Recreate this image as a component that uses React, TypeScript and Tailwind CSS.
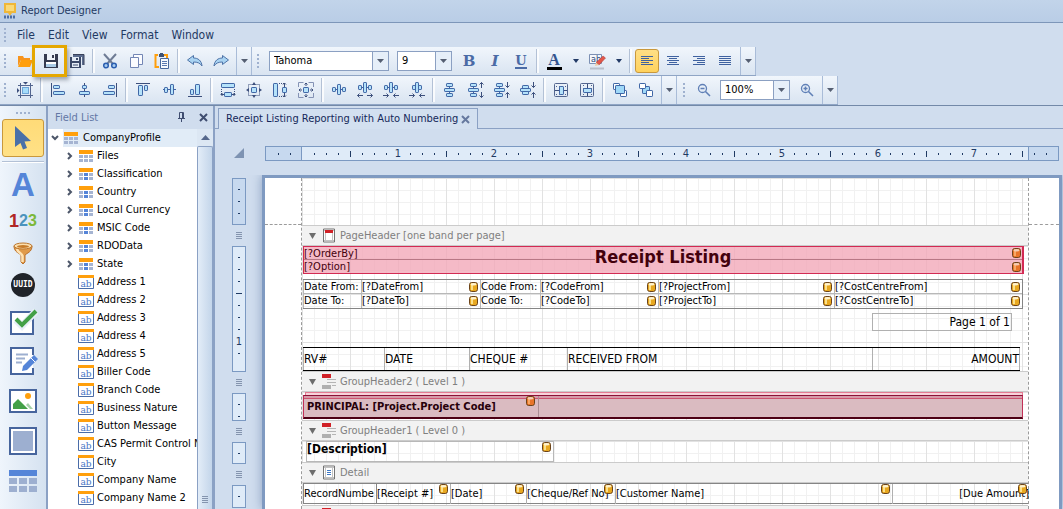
import React from 'react';

const INK = '#3c4f7c';
const EDGE = '#3f66a6';
const FILL = '#b5e2fa';

type BoxProps = { x: number; y: number; w: number; h: number; f?: string };

function Box({ x, y, w, h, f = FILL }: BoxProps) {
  return <rect x={x + 0.5} y={y + 0.5} width={w - 1} height={h - 1} fill={f} stroke={EDGE} rx={0.6} />;
}

function Glyph({ children }: { children: React.ReactNode }) {
  return (
    <svg width="16" height="16" viewBox="0 0 16 16" fill="none" aria-hidden="true">
      {children}
    </svg>
  );
}

const Line = ({ d, c = INK }: { d: string; c?: string }) => <path d={d} stroke={c} fill="none" />;

const arrowsOut = <Line d="M0.5 13.5H6M2.5 11.5L0.5 13.5L2.5 15.5M10 13.5H15.5M13.5 11.5L15.5 13.5L13.5 15.5" />;
const arrowsIn = <Line d="M0 13.5H5.5M3.5 11.5L5.5 13.5L3.5 15.5M10.5 13.5H16M12.5 11.5L10.5 13.5L12.5 15.5" />;
const arrowsOutV = <Line d="M13.5 0.5V6M11.5 2.5L13.5 0.5L15.5 2.5M13.5 10V15.5M11.5 13.5L13.5 15.5L15.5 13.5" />;
const arrowsInV = <Line d="M13.5 0V5.5M11.5 3.5L13.5 5.5L15.5 3.5M13.5 10.5V16M11.5 12.5L13.5 10.5L15.5 12.5" />;

const spreadH = (
  <>
    <Line c={EDGE} d="M1 5.5H15" />
    <Box x={1} y={3} w={4} h={5} />
    <Box x={6} y={0} w={4} h={11} />
    <Box x={11} y={3} w={4} h={5} />
  </>
);
const spreadV = (
  <>
    <Line c={EDGE} d="M5.5 1V15" />
    <Box x={2} y={1} w={7} h={4} />
    <Box x={0} y={6} w={11} h={4} />
    <Box x={2} y={11} w={7} h={4} />
  </>
);

const layoutGroups: { name: string; art: React.ReactNode }[][] = [
  [
    {
      name: 'Align to grid',
      art: (
        <>
          <Line d="M3.5 1V16M13.5 1V16M1 3.5H16M1 13.5H16" c="#53658f" />
          <rect x="5.500" y="5.500" width="6" height="6" fill="#a4dcfa" stroke="#6fa4d6" />
          <path d="M6 0H11L8.500 2.500ZM0 6V11L2.500 8.500Z" fill={INK} />
        </>
      ),
    },
  ],
  [
    { name: 'Align lefts', art: (<><Line d="M1.5 1V15" /><Box x={3} y={3} w={7} h={4} /><Box x={3} y={9} w={12} h={4} /></>) },
    { name: 'Align centers', art: (<><Line d="M8.5 1V15" /><Box x={6} y={3} w={5} h={4} /><Box x={3} y={9} w={11} h={4} /></>) },
    { name: 'Align rights', art: (<><Line d="M14.5 1V15" /><Box x={6} y={3} w={7} h={4} /><Box x={1} y={9} w={12} h={4} /></>) },
  ],
  [
    { name: 'Align tops', art: (<><Line d="M1 1.5H15" /><Box x={3} y={3} w={5} h={11} /><Box x={9} y={3} w={4} h={6} /></>) },
    { name: 'Align middles', art: (<><Line d="M2 7.5H15" c={EDGE} /><Box x={3} y={5} w={4} h={6} /><Box x={9} y={2} w={4} h={11} /></>) },
    { name: 'Align bottoms', art: (<><Line d="M1 14.5H15" /><Box x={3} y={7} w={4} h={6} /><Box x={8} y={2} w={5} h={11} /></>) },
  ],
  [
    {
      name: 'Same width',
      art: (
        <>
          <Box x={1} y={1} w={14} h={5} />
          <path d="M1.5 7V12M14.5 7V12" stroke={INK} strokeDasharray="1 1" />
          <Line d="M1 12.5H4M12 12.5H15M2.500 11L1 12.500L2.500 14M13.500 11L15 12.500L13.500 14" />
          <Box x={4} y={10} w={8} h={5} />
        </>
      ),
    },
    {
      name: 'Size to grid',
      art: (
        <>
          <path d="M2.5 2.5H13.5V13.5H2.5Z" stroke={INK} strokeDasharray="1 1" />
          <Box x={5} y={5} w={6} h={6} />
          <path d="M6 3L8 0L10 3ZM6 13L8 16L10 13ZM3 6L0 8L3 10ZM13 6L16 8L13 10Z" fill={INK} />
        </>
      ),
    },
    {
      name: 'Same height',
      art: (
        <>
          <Box x={1} y={1} w={5} h={14} />
          <path d="M7 1.5H12M7 14.5H12" stroke={INK} strokeDasharray="1 1" />
          <Line d="M12.5 1V5M12.5 11V15M11 2.5L12.5 1L14 2.5M11 13.5L12.5 15L14 13.5" />
          <Box x={10} y={5} w={5} h={6} />
        </>
      ),
    },
    {
      name: 'Same size',
      art: (
        <>
          <path d="M0.5 5V0.5H5.500M10.500 0.5H15.500V5M15.500 11V15.500H10.500M5.500 15.500H0.500V11" stroke="#8593b5" fill="none" />
          <Box x={5} y={5} w={6} h={6} />
          <Line d="M8 1V4M8 12V15M1 8H4M12 8H15M6.500 2.500L8 1L9.500 2.500M6.500 13.500L8 15L9.500 13.500M2.500 6.500L1 8L2.500 9.500M13.500 6.500L15 8L13.500 9.500" />
        </>
      ),
    },
  ],
  [
    { name: 'Make horizontal spacing equal', art: (<g transform="translate(0 2)">{spreadH}</g>) },
    { name: 'Increase horizontal spacing', art: (<>{spreadH}{arrowsOut}</>) },
    { name: 'Decrease horizontal spacing', art: (<>{spreadH}{arrowsIn}</>) },
    {
      name: 'Remove horizontal spacing',
      art: (<><Box x={3} y={3} w={4} h={5} /><Box x={6} y={0} w={4} h={11} /><Box x={9} y={3} w={4} h={5} />{arrowsIn}</>),
    },
  ],
  [
    { name: 'Make vertical spacing equal', art: (<g transform="translate(2 0)">{spreadV}</g>) },
    { name: 'Increase vertical spacing', art: (<>{spreadV}{arrowsOutV}</>) },
    { name: 'Decrease vertical spacing', art: (<>{spreadV}{arrowsInV}</>) },
    {
      name: 'Remove vertical spacing',
      art: (<><Box x={2} y={3} w={7} h={4} /><Box x={0} y={6} w={11} h={4} /><Box x={2} y={9} w={7} h={4} />{arrowsInV}</>),
    },
  ],
  [
    {
      name: 'Center horizontally',
      art: (<><rect x="1.500" y="1.500" width="13" height="13" rx="1" stroke="#53658f" /><path d="M3 4.500H14M3 12.500H14" stroke="#53658f" strokeDasharray="1 2" /><Line d="M2 8.5H14" /><Box x={6} y={4} w={5} h={9} /></>),
    },
    {
      name: 'Center vertically',
      art: (<><rect x="1.500" y="1.500" width="13" height="13" rx="1" stroke="#53658f" /><path d="M4.500 3V14M12.500 3V14" stroke="#53658f" strokeDasharray="1 2" /><Line d="M8.500 2V14" /><Box x={4} y={6} w={9} h={5} /></>),
    },
  ],
  [
    { name: 'Bring to front', art: (<><Box x={1} y={1} w={7} h={7} f="#fff" /><Box x={8} y={8} w={7} h={7} f="#fff" /><Box x={3} y={3} w={10} h={9} f="#9fd8f8" /></>) },
    { name: 'Send to back', art: (<><Box x={4} y={4} w={8} h={8} f="#9fd8f8" /><Box x={1} y={1} w={7} h={6} f="#fff" /><Box x={8} y={8} w={7} h={7} f="#fff" /></>) },
  ],
];

function ToolButton({ name, children, active }: { name: string; children: React.ReactNode; active?: boolean }) {
  return (
    <button
      type="button"
      aria-label={name}
      title={name}
      className={
        active
          ? 'flex h-6 w-6 mx-px shrink-0 items-center justify-center rounded-[3px] border border-[#c9983c] bg-gradient-to-b from-[#ffdf85] to-[#ffd25c]'
          : 'flex h-6 w-[26px] shrink-0 items-center justify-center'
      }
    >
      {children}
    </button>
  );
}

function Grip() {
  return (
    <span className="flex w-3 shrink-0 flex-col gap-[2px] pl-1">
      {[0, 1, 2, 3].map((i) => (
        <span key={i} className="h-[2px] w-[2px] bg-[#9fb1cf]" />
      ))}
    </span>
  );
}

const Divider = () => <span className="mx-[2px] h-6 w-[3px] shrink-0 border-l border-[#b3c1d6] bg-white/80" />;

const Caret = () => (
  <svg width="7" height="4" viewBox="0 0 7 4" aria-hidden="true">
    <path d="M0 0H7L3.500 4Z" fill="#555f72" />
  </svg>
);

function Overflow() {
  return (
    <button type="button" aria-label="Toolbar options" className="ml-[2px] flex h-full w-4 shrink-0 items-center justify-center border-x border-[#a9bcd8]">
      <Caret />
    </button>
  );
}

function DropCaret({ name }: { name: string }) {
  return (
    <button type="button" aria-label={name} className="flex h-6 w-[17px] shrink-0 items-center justify-center">
      <svg width="6" height="4" viewBox="0 0 6 4" aria-hidden="true">
        <path d="M0 0H6L3 4Z" fill="#223a66" />
      </svg>
    </button>
  );
}

function Combo({ label, value, width }: { label: string; value: string; width: string }) {
  return (
    <span className={`relative mr-1 flex h-5 shrink-0 border border-[#8ba0c2] bg-white ${width}`}>
      <select aria-label={label} defaultValue={value} className="h-full w-full appearance-none bg-transparent pl-[4px] text-[11px] leading-[18px] text-black outline-none">
        <option>{value}</option>
      </select>
      <span className="pointer-events-none absolute inset-y-0 right-0 flex w-4 items-center justify-center border-l border-[#8ba0c2] bg-[#e6eff9]">
        <Caret />
      </span>
    </span>
  );
}

const bar = 'flex h-[29px] items-center border-b border-[#8fa5c5] bg-gradient-to-b from-[#f1f6fc] to-[#d9e4f1]';

function AlignLines({ rows }: { rows: [number, number][] }) {
  return (
    <svg width="13" height="11" viewBox="0 0 13 11" aria-hidden="true">
      {rows.map(([x, w], i) => (
        <rect key={i} x={x} y={i * 2} width={w} height="1" fill="#3f62a0" />
      ))}
    </svg>
  );
}

function Toolbars() {
  return (
    <div className="flex flex-col border-b border-[#7389a8]">
      <div className="flex">
        <div className={bar}>
          <Grip />
          <ToolButton name="Open">
            <Glyph>
              <path d="M1 13V3H6L7 5H13V7H4Z" fill="#f7941d" />
              <path d="M4 7H16L13 14H1Z" fill="#ff9f0c" />
            </Glyph>
          </ToolButton>
          <span className="relative flex">
            <ToolButton name="Save">
              <Glyph>
                <path d="M1 1H15V15H1Z" fill="#353b50" />
                <path d="M4 1H12V7H4Z" fill="#eef3fa" />
                <path d="M9 2H11V5H9Z" fill="#353b50" />
                <path d="M3 9H13V14H3Z" fill="#fff" />
                <path d="M3 11H13V14H3Z" fill="#a9cbe6" />
              </Glyph>
            </ToolButton>
            <span className="pointer-events-none absolute -left-[6px] -top-1 z-10 h-8 w-[35px] border-[3px] border-[#e5a700] shadow-[2px_3px_4px_rgba(60,70,90,0.45)]" />
          </span>
          <ToolButton name="Save all">
            <Glyph>
              <path d="M4 1H15V12H13V4H4Z" fill="#5b6c8e" />
              <path d="M4 1.500H15V12" stroke="#39415a" />
              <path d="M1 4H12V15H1Z" fill="#3a4868" />
              <path d="M3 4H10V8H3ZM3 10H10V14H3Z" fill="#e4ecf6" />
              <path d="M7 5H9V7H7ZM4 11.500H9V12.500H4Z" fill="#3a4868" />
            </Glyph>
          </ToolButton>
          <Divider />
          <ToolButton name="Cut">
            <Glyph>
              <path d="M2 1L11 11M14 1L5 11" stroke="#6f7c95" strokeWidth="2" />
              <circle cx="4" cy="12.500" r="2.300" fill="#a9cdf0" stroke="#2c5fb0" strokeWidth="1.500" />
              <circle cx="12" cy="12.500" r="2.300" fill="#a9cdf0" stroke="#2c5fb0" strokeWidth="1.500" />
            </Glyph>
          </ToolButton>
          <ToolButton name="Copy">
            <Glyph>
              <path d="M5.500 1.500H14.500V11.500H5.500Z" fill="#fbfcff" stroke="#7386b5" />
              <path d="M2.500 4.500H10.500V14.500H2.500Z" fill="#fbfcff" stroke="#7386b5" />
            </Glyph>
          </ToolButton>
          <ToolButton name="Paste">
            <Glyph>
              <path d="M4 2H1.500V14H5M10 2H13V5" stroke="#ff9f0c" strokeWidth="2" />
              <path d="M5 1H10V4H5ZM6 0H9V2H6Z" fill="#3d5274" />
              <path d="M6.500 5.500H14.500V15.500H6.500Z" fill="#f8fbfe" stroke="#4a6a9c" />
              <path d="M8 8.500H13M8 10.500H13M8 12.500H13" stroke="#5b7ab0" />
            </Glyph>
          </ToolButton>
          <Divider />
          <ToolButton name="Undo">
            <Glyph>
              <path d="M0.500 7L6.500 2.500V5C11 5 14.500 7.500 15 13C13 10 10.500 9 6.500 9V11.500Z" fill="#a9d3f2" stroke="#4f74a8" />
            </Glyph>
          </ToolButton>
          <ToolButton name="Redo">
            <Glyph>
              <path d="M15.500 7L9.500 2.500V5C5 5 1.500 7.500 1 13C3 10 5.500 9 9.500 9V11.500Z" fill="#a9d3f2" stroke="#4f74a8" />
            </Glyph>
          </ToolButton>
          <Overflow />
        </div>
        <div className={`${bar} pl-px`}>
          <Grip />
          <span className="w-1" />
          <Combo label="Font name" value="Tahoma" width="w-[120px]" />
          <span className="w-1" />
          <Combo label="Font size" value="9" width="w-[55px]" />
          <ToolButton name="Bold">
            <span className="font-['DejaVu_Serif','Liberation_Serif',serif] text-[15px] font-bold text-[#4b6ba6]">B</span>
          </ToolButton>
          <ToolButton name="Italic">
            <span className="font-['DejaVu_Serif','Liberation_Serif',serif] text-[15px] font-bold italic text-[#4b6ba6]">I</span>
          </ToolButton>
          <ToolButton name="Underline">
            <span className="border-b-2 border-[#4b6ba6] font-['DejaVu_Serif','Liberation_Serif',serif] text-[13px] font-bold leading-[13px] text-[#4b6ba6]">U</span>
          </ToolButton>
          <Divider />
          <ToolButton name="Font color">
            <span className="w-[15px] border-b-[3px] border-black text-center font-['Liberation_Serif',serif] text-[16px] font-bold leading-[14px] text-[#34548f]">A</span>
          </ToolButton>
          <DropCaret name="Font color options" />
          <ToolButton name="Highlight color">
            <svg width="17" height="17" viewBox="0 0 17 17" fill="none" aria-hidden="true">
              <path d="M0.500 1.500H12.500V10.500H0.500Z" fill="#f5f8fd" stroke="#7c90b4" />
              <text x="2" y="9" fontSize="9" fill="#2f4a7c" fontFamily="DejaVu Sans Condensed">ab</text>
              <path d="M14 3L16.500 5L10 12L7 9.500Z" fill="#e2574a" stroke="#a83a34" strokeWidth="0.500" />
              <path d="M7 9.500L10 12L6 13Z" fill="#efc9a0" />
              <path d="M1 15.500H15" stroke="#b9bfca" strokeWidth="2" />
            </svg>
          </ToolButton>
          <DropCaret name="Highlight color options" />
          <Divider />
          <ToolButton name="Align left" active>
            <AlignLines rows={[[0, 12], [0, 8], [0, 12], [0, 8], [0, 12]]} />
          </ToolButton>
          <ToolButton name="Align center">
            <AlignLines rows={[[0, 12], [2, 8], [0, 12], [2, 8], [0, 12]]} />
          </ToolButton>
          <ToolButton name="Align right">
            <AlignLines rows={[[0, 12], [4, 8], [0, 12], [4, 8], [0, 12]]} />
          </ToolButton>
          <ToolButton name="Justify">
            <AlignLines rows={[[0, 12], [0, 12], [0, 12], [0, 12], [0, 12]]} />
          </ToolButton>
          <Overflow />
        </div>
      </div>
      <div className="flex">
        <div className={bar}>
          <Grip />
          {layoutGroups.map((group, i) => (
            <React.Fragment key={i}>
              {i > 0 && <Divider />}
              {group.map((tool) => (
                <ToolButton key={tool.name} name={tool.name}>
                  <Glyph>{tool.art}</Glyph>
                </ToolButton>
              ))}
            </React.Fragment>
          ))}
          <Overflow />
        </div>
        <div className={`${bar} pl-[2px]`}>
          <Grip />
          <ToolButton name="Zoom out">
            <Glyph>
              <circle cx="6.500" cy="6.500" r="4" stroke="#5f7fb6" strokeWidth="1.300" />
              <path d="M4.500 6.500H8.500M9.500 9.500L14 14" stroke="#5f7fb6" strokeWidth="1.500" />
            </Glyph>
          </ToolButton>
          <span className="w-[3px]" />
          <Combo label="Zoom" value="100%" width="w-[70px]" />
          <ToolButton name="Zoom in">
            <Glyph>
              <circle cx="6.500" cy="6.500" r="4" stroke="#5f7fb6" strokeWidth="1.300" />
              <path d="M4.500 6.500H8.500M6.500 4.500V8.500M9.500 9.500L14 14" stroke="#5f7fb6" strokeWidth="1.500" />
            </Glyph>
          </ToolButton>
          <Overflow />
        </div>
      </div>
    </div>
  );
}

const toolItem = 'flex w-full shrink-0 items-center justify-center';

function Toolbox() {
  return (
    <aside className="flex w-[48px] shrink-0 flex-col items-center overflow-hidden border-r-2 border-[#8ba1c4] bg-gradient-to-r from-[#eff5fc] to-[#d5e2f0]">
      <div className="flex h-[13px] shrink-0 items-center gap-[2px]">
        {[0, 1, 2, 3].map((i) => (
          <span key={i} className="h-[2px] w-[2px] bg-[#9fb1cf]" />
        ))}
      </div>
      <button type="button" aria-label="Pointer" className="flex h-[38px] w-[42px] shrink-0 items-center justify-center rounded-[3px] border border-[#c9983c] bg-gradient-to-b from-[#ffdb78] to-[#ffe186]">
        <svg width="16" height="24" viewBox="0 0 16 24" aria-hidden="true">
          <path d="M0 0L16 15L9.500 15.500L12 22L8 23.500L5.500 17L0 21Z" fill="#4a70a8" />
        </svg>
      </button>
      <span className="mt-1 mb-[4px] h-[2px] w-[42px] shrink-0 border-t border-[#b3c1d6] bg-white" />
      <button type="button" aria-label="Label" className={`${toolItem} h-9 font-['Liberation_Sans',sans-serif] text-[33px] font-bold leading-9 text-[#5585d8]`}>
        A
      </button>
      <button type="button" aria-label="Character comb" className={`${toolItem} h-9 font-['Liberation_Sans',sans-serif] leading-9`}>
        <span className="text-[18px] font-bold text-[#b02626]">1</span>
        <span className="text-[16px] font-bold text-[#4b93bd]">2</span>
        <span className="text-[16px] font-bold text-[#7cb83b]">3</span>
      </button>
      <button type="button" aria-label="Filter" className={`${toolItem} h-7`}>
        <svg width="20" height="22" viewBox="0 0 20 22" aria-hidden="true">
          <path d="M1 4C1 10 6 11 8 13V20L10 22L12 20V13C14 11 19 10 19 4Z" fill="#e09a4a" stroke="#b9712c" />
          <path d="M4 7C5 11 9 11 9.500 14V20" stroke="#ffe3b3" strokeWidth="2.500" fill="none" />
          <ellipse cx="10" cy="4" rx="9" ry="3" fill="#fbdfae" stroke="#bc772f" />
          <ellipse cx="10" cy="4.500" rx="6" ry="1.500" fill="#c67b2a" />
        </svg>
      </button>
      <button type="button" aria-label="UUID" className={`${toolItem} h-9`}>
        <span className="flex h-6 w-6 items-center justify-center rounded-full bg-[#20242a] font-['DejaVu_Sans_Mono',monospace] text-[8px] font-bold leading-none text-white">UUID</span>
      </button>
      <button type="button" aria-label="Check box" className={`${toolItem} h-[38px]`}>
        <svg width="30" height="28" viewBox="0 0 30 28" fill="none" aria-hidden="true">
          <path d="M3 4H25V26H3Z" fill="#fff" stroke="#47659d" strokeWidth="2" />
          <path d="M8 12L14 18L28 3" stroke="#e6eef7" strokeWidth="7" />
          <path d="M8 11L14 17L28 3" stroke="#43a047" strokeWidth="4" />
        </svg>
      </button>
      <button type="button" aria-label="Rich text" className={`${toolItem} h-10`}>
        <svg width="30" height="30" viewBox="0 0 30 30" fill="none" aria-hidden="true">
          <path d="M25 9V2H3V28H25V22" fill="#fff" stroke="#47659d" strokeWidth="2" />
          <path d="M8 8.500H20M8 12.500H17M8 16.500H14" stroke="#9dafd0" strokeWidth="2" />
          <path d="M14 25L15 20L26 9L30 13L19 24Z" fill="#5585d8" />
          <path d="M23 12L27 16" stroke="#fff" />
        </svg>
      </button>
      <button type="button" aria-label="Picture box" className={`${toolItem} h-10`}>
        <svg width="28" height="24" viewBox="0 0 28 24" fill="none" aria-hidden="true">
          <path d="M1 1H27V23H1Z" fill="#fff" stroke="#47659d" strokeWidth="2" />
          <circle cx="19" cy="7" r="3" fill="#ff9f0c" />
          <path d="M4 20V15L9 10L19 20Z" fill="#43a047" />
          <path d="M17 16L19 14L24 20H21Z" fill="#a5d0a8" />
        </svg>
      </button>
      <button type="button" aria-label="Panel" className={`${toolItem} h-10`}>
        <span className="flex h-7 w-7 border-2 border-[#47659d] bg-white p-[2px]">
          <span className="flex-1 bg-[#9dafd0]" />
        </span>
      </button>
      <button type="button" aria-label="Table" className={`${toolItem} h-10`}>
        <svg width="28" height="23" viewBox="0 0 28 23" aria-hidden="true">
          <path d="M0 0H28V6H0Z" fill="#5585d8" />
          <path d="M0 8H8V14H0ZM10 8H18V14H10ZM20 8H28V14H20ZM0 16H8V22H0ZM10 16H18V22H10ZM20 16H28V22H20Z" fill="#9dafd0" />
        </svg>
      </button>
    </aside>
  );
}

function TableIcon({ related }: { related?: boolean }) {
  return (
    <svg width="14" height="12" viewBox="0 0 14 12" aria-hidden="true" className="shrink-0">
      <path d="M0 0H14V4H0Z" fill="#ff9f0c" />
      <path d="M0 5H4V8H0ZM5 5H9V8H5ZM10 5H14V8H10ZM0 9H4V12H0ZM5 9H9V12H5ZM10 9H14V12H10Z" fill="#a5b4d2" />
      {related && <path d="M5 5H9V8H5ZM5 9H9V12H5Z" fill="#5585d8" />}
    </svg>
  );
}

function FieldIcon() {
  return (
    <svg width="16" height="14" viewBox="0 0 16 14" aria-hidden="true" className="shrink-0">
      <path d="M0.500 2.500H15.500V13.500H0.500Z" fill="#fff" stroke="#4a6ca8" />
      <path d="M0 0H16V3H0Z" fill="#ff9f0c" />
      <text x="8" y="11.500" textAnchor="middle" fontSize="9" fontFamily="DejaVu Serif" fill="#4674c4">ab</text>
    </svg>
  );
}

const tables = ['Files', 'Classification', 'Country', 'Local Currency', 'MSIC Code', 'RDOData', 'State'];
const fields = [
  'Address 1', 'Address 2', 'Address 3', 'Address 4', 'Address 5', 'Biller Code', 'Branch Code',
  'Business Nature', 'Button Message', 'CAS Permit Control No', 'City', 'Company Name', 'Company Name 2',
];

function FieldList() {
  return (
    <section className="flex w-[165px] shrink-0 flex-col overflow-hidden">
      <header className="flex h-[23px] shrink-0 items-center pl-[7px] pr-1 text-[#6377a5]">
        <h2 className="flex-1">Field List</h2>
        <button type="button" aria-label="Pin" className="mr-[13px]">
          <svg width="9" height="11" viewBox="0 0 9 11" fill="none" aria-hidden="true">
            <path d="M2.500 0.500H6.500V6M5.500 1V6M2.500 0.500V6M1 6.500H8M4.500 7V10" stroke="#3f4d70" />
          </svg>
        </button>
        <button type="button" aria-label="Close field list" className="-mr-px">
          <svg width="9" height="9" viewBox="0 0 9 9" aria-hidden="true">
            <path d="M1 1L8 8M8 1L1 8" stroke="#3f4d70" strokeWidth="2" />
          </svg>
        </button>
        <span className="w-[2px]" />
      </header>
      <div className="flex min-h-0 flex-1 bg-white">
        <ul className="min-w-0 flex-1 overflow-hidden whitespace-nowrap text-black">
          <li>
            <div className="flex h-[18px] items-center">
              <button type="button" aria-label="Collapse CompanyProfile" className="flex w-[15px] justify-center pr-[2px]">
                <svg width="8" height="6" viewBox="0 0 8 6" fill="none" aria-hidden="true">
                  <path d="M1 1L4 4L7 1" stroke="#4c5669" strokeWidth="2" />
                </svg>
              </button>
              <span className="flex h-full flex-1 items-center gap-[5px] bg-[#e1ecf7] pl-px">
                <TableIcon />
                CompanyProfile
              </span>
            </div>
            <ul>
              {tables.map((name, i) => (
                <li key={name} className="flex h-[18px] items-center gap-[4px] pl-[19px]">
                  <button type="button" aria-label={`Expand ${name}`} className="w-2">
                    <svg width="6" height="8" viewBox="0 0 6 8" fill="none" aria-hidden="true">
                      <path d="M1 1L4 4L1 7" stroke="#4c5669" strokeWidth="2" />
                    </svg>
                  </button>
                  <TableIcon related={i > 0} />
                  {name}
                </li>
              ))}
              {fields.map((name) => (
                <li key={name} className="flex h-[18px] items-center gap-[3px] pl-[30px]">
                  <FieldIcon />
                  {name}
                </li>
              ))}
            </ul>
          </li>
        </ul>
        <div className="flex w-4 shrink-0 flex-col bg-[#dce7f3]">
          <span className="flex h-[17px] items-center justify-center">
            <svg width="9" height="5" viewBox="0 0 9 5" aria-hidden="true">
              <path d="M0 5H9L4.500 0Z" fill="#56688c" />
            </svg>
          </span>
          <span className="flex flex-1 flex-col items-center justify-end rounded-t-[2px] border border-b-0 border-[#8ba1c4] bg-gradient-to-r from-[#e3edf8] to-[#c3d5ea] pb-[6px]">
            <Lines />
          </span>
        </div>
      </div>
    </section>
  );
}

const Lines = () => (
  <svg width="6" height="7" viewBox="0 0 6 7" aria-hidden="true" shapeRendering="crispEdges">
    <path d="M0 0.500H6M0 2.500H6M0 4.500H6M0 6.500H6" stroke="#8494ae" />
  </svg>
);

function RulerX() {
  const cells = Array.from({ length: 60 }, (_, i) => i + 1);
  const small = <span className="h-[2px] w-px bg-[#1f3a63]" />;
  return (
    <div className="flex h-[15px] w-[794px] border border-[#7b99c2] bg-[#dfebf8]">
      <span className="flex w-9 items-center gap-[11px] border-r border-[#7b99c2] bg-[#c7d9ef] pl-3">
        {small}
        {small}
      </span>
      <span className="flex flex-1 items-center pl-[6px]">
        {cells.map((n) => (
          <span key={n} className="flex w-3 shrink-0 items-center justify-center text-[11px] leading-none text-[#1f3a63]">
            {n % 8 === 0 ? n / 8 : n % 4 === 0 ? <span className="h-[6px] w-px bg-[#1f3a63]" /> : small}
          </span>
        ))}
      </span>
      <span className="flex w-[30px] items-center gap-[11px] border-l border-[#7b99c2] bg-[#c7d9ef] pl-[5px]">
        {small}
        {small}
      </span>
    </div>
  );
}

function RulerSegment({ height, ticks, margin }: { height: string; ticks: number; margin?: boolean }) {
  return (
    <span
      className={`flex shrink-0 flex-col overflow-hidden border border-[#7b99c2] pt-[4px] ${height} ${margin ? 'bg-[#c7d9ef]' : 'bg-[#dfebf8]'}`}
    >
      {Array.from({ length: ticks }, (_, i) => i + 1).map((n) => (
        <span key={n} className="flex h-3 shrink-0 items-center justify-center text-[11px] leading-none text-[#1f3a63]">
          {n === 8 ? 1 : <span className={n % 4 === 0 ? 'h-px w-[6px] bg-[#1f3a63]' : 'h-px w-[2px] bg-[#1f3a63]'} />}
        </span>
      ))}
    </span>
  );
}

const BandHandle = () => (
  <span className="flex h-[21px] shrink-0 items-center justify-center">
    <Lines />
  </span>
);

const Db = ({ warm }: { warm?: boolean }) => (
  <svg width="9" height="10" viewBox="0 0 9 10" aria-hidden="true" className="shrink-0">
    <rect x="0.500" y="0.500" width="8" height="9" rx="2.200" fill={warm ? '#e8742a' : '#e8a820'} stroke="#6b431a" />
    <rect x="2" y="3" width="2" height="5" fill={warm ? '#f7a865' : '#fbe08a'} />
    <ellipse cx="4.500" cy="2.300" rx="3" ry="1.200" fill={warm ? '#f5cdb4' : '#fff3cf'} />
  </svg>
);

const gridPaper =
  'bg-[linear-gradient(to_right,#e2e2e2_1px,transparent_1px),linear-gradient(to_bottom,#e2e2e2_1px,transparent_1px),linear-gradient(to_right,#f1f1f1_1px,transparent_1px),linear-gradient(to_bottom,#f1f1f1_1px,transparent_1px)] bg-[length:48px_48px,48px_48px,12px_12px,12px_12px]';

type BandKind = 'page' | 'group' | 'detail';

function BandIcon({ kind }: { kind: BandKind }) {
  if (kind === 'group') {
    return (
      <svg width="15" height="15" viewBox="0 0 15 15" aria-hidden="true">
        <path d="M0 0H9V4H0Z" fill="#d02127" />
        <path d="M5 5.500H14M5 8.500H14M10 11.500H14" stroke="#b5b5b5" />
        <path d="M0 11H9V15H0Z" fill="#b0b0b0" />
      </svg>
    );
  }
  return (
    <svg width="14" height="15" viewBox="0 0 14 15" fill="none" aria-hidden="true">
      <path d="M1.500 1H12.500V14H1.500Z" fill="#fff" stroke="#737373" />
      <path d="M3.500 2V13M10.500 2V13M2 2.500H12M2 12.500H12" stroke="#c2c2c2" />
      {kind === 'page' ? (
        <path d="M3 2H11V5H3Z" fill="#d02127" />
      ) : (
        <path d="M5 5.500H9M5 7.500H9M5 9.500H9" stroke="#3f78c4" />
      )}
    </svg>
  );
}

function Band({ title, kind, height, children }: { title: string; kind: BandKind; height: string; children?: React.ReactNode }) {
  return (
    <section>
      <header className="flex h-[21px] items-center border-y border-[#cbcbcb] bg-[#f2f2f2] pl-[7px] text-[#7f7f7f]">
        <svg width="7" height="6" viewBox="0 0 7 6" aria-hidden="true" className="mr-[6px]">
          <path d="M0 0H7L3.500 6Z" fill="#6d6d6d" />
        </svg>
        <span className="flex w-[18px] items-center">
          <BandIcon kind={kind} />
        </span>
        <h3>{title}</h3>
      </header>
      <div className={`${gridPaper} ${height}`}>{children}</div>
    </section>
  );
}

function Param({ text, db }: { text: string; db?: boolean }) {
  return (
    <span className="flex items-center justify-between border-l border-[#b8b8b8] pr-[2px]">
      <span>{text}</span>
      {db && <Db />}
    </span>
  );
}

const paramRows = [
  ['Date From:', '[?DateFrom]', 'Code From:', '[?CodeFrom]', '[?ProjectFrom]', '[?CostCentreFrom]'],
  ['Date To:', '[?DateTo]', 'Code To:', '[?CodeTo]', '[?ProjectTo]', '[?CostCentreTo]'],
];

function ReportPage() {
  return (
    <div className="flex w-[800px] shrink-0 border-x-[3px] border-t-[3px] border-[#7f9ac1] bg-white shadow-[0_0_10px_rgba(70,100,150,0.5)]">
      <div className="w-[37px] shrink-0 border-r border-dashed border-[#9b9b9b]">
        <div className="h-[47px] border-b border-dashed border-[#9b9b9b]" />
      </div>
      <div className="w-[726px] shrink-0">
        <div className={`h-[47px] ${gridPaper}`} />
        <Band title="PageHeader [one band per page]" kind="page" height="h-[125px]">
          <div className="ml-px grid h-7 w-[721px] grid-cols-[1fr_auto_1fr] border border-r-2 border-[#d22a53] bg-[#f2a9b9]/80 text-[11px] text-[#43000c]">
            <div className="flex flex-col">
              <span className="h-[13px] border-b border-[#b87785] leading-[13px]">[?OrderBy]</span>
              <span className="h-[13px] leading-[13px]">[?Option]</span>
            </div>
            <strong className="text-[18px] leading-5">Receipt Listing</strong>
            <div className="flex flex-col">
              <span className="flex h-[13px] items-center justify-end border-b border-[#b87785] pr-px"><Db warm /></span>
              <span className="flex h-[13px] items-center justify-end pr-px"><Db warm /></span>
            </div>
          </div>
          <div className="ml-px mt-[5px] w-[720px] border border-[#858585]">
            {paramRows.map((row, r) => (
              <div
                key={r}
                className={
                  r === 0
                    ? '-ml-px grid h-[14px] grid-cols-[58px_119px_60px_118px_176px_1fr] border-b border-[#b8b8b8] leading-[13px]'
                    : '-ml-px grid h-[14px] grid-cols-[58px_119px_60px_118px_176px_1fr] leading-[14px]'
                }
              >
                {row.map((text) => (
                  <Param key={text} text={text} db={text.startsWith('[')} />
                ))}
              </div>
            ))}
          </div>
          <div className="ml-[570px] mt-1 h-[18px] w-[140px] border border-[#b0b0b0] pr-px text-right text-[12px] leading-4">Page 1 of 1</div>
          <div className="ml-px mt-4 grid h-6 w-[717px] grid-cols-[81px_85px_98px_305px_1fr] border-y border-black text-[12px] leading-[22px]">
            <span className="border-l border-[#b0b0b0]">RV#</span>
            <span className="border-l border-[#b0b0b0]">DATE</span>
            <span className="border-l border-[#b0b0b0]">CHEQUE #</span>
            <span className="border-l border-[#b0b0b0]">RECEIVED FROM</span>
            <span className="border-x border-[#b0b0b0] text-right">AMOUNT</span>
          </div>
        </Band>
        <Band title="GroupHeader2 ( Level 1 )" kind="group" height="h-7">
          <div className="ml-[3px] h-[3px] w-[718px] border border-b-0 border-[#e47a92] bg-[#f8d3da]" />
          <div className="ml-px h-6 w-[720px] border-x border-t border-b-2 border-x-[#c23057] border-t-[#8c1136] border-b-[#4d0014] bg-[#dabbc1]">
            <div className="h-[3px] border-b border-[#cf5470] bg-[#d59aa8]" />
            <div className="-mt-[3px] flex h-[21px]">
              <div className="flex w-[235px] justify-between border-r border-[#ab8e94] pl-[3px] pr-[3px] font-bold leading-[21px] text-[#26000a]">
                PRINCIPAL: [Project.Project Code]
                <span><Db warm /></span>
              </div>
            </div>
          </div>
        </Band>
        <Band title="GroupHeader1 ( Level 0 )" kind="group" height="h-[21px]">
          <div className="ml-1 flex h-[21px] w-[248px] justify-between border border-[#b8b8b8] pr-[2px] text-[12px] font-bold leading-[15px]">
            [Description]
            <span><Db /></span>
          </div>
        </Band>
        <Band title="Detail" kind="detail" height="h-[22px]">
          <div className="ml-px grid h-[21px] w-[726px] grid-cols-[74px_74px_76px_89px_277px_1fr] border-y border-[#858585] leading-5">
            <span className="overflow-hidden border-x border-[#858585]">RecordNumbe</span>
            {['[Receipt #]', '[Date]', '[Cheque/Ref No]', '[Customer Name]'].map((text) => (
              <span key={text} className="relative whitespace-nowrap border-r border-[#b0b0b0]">
                {text}
                <span className="absolute right-[2px] top-0"><Db /></span>
              </span>
            ))}
            <span className="relative text-right">
              [Due Amount]
              <span className="absolute right-[2px] top-0"><Db /></span>
            </span>
          </div>
        </Band>
        <Band title="" kind="group" height="h-10" />
      </div>
      <div className="flex-1 border-l border-dashed border-[#9b9b9b]">
        <div className="h-[47px] border-b border-dashed border-[#9b9b9b]" />
      </div>
    </div>
  );
}

function DesignSurface() {
  return (
    <main className="flex min-w-0 flex-1 flex-col overflow-hidden border-l-2 border-[#8ba1c4]">
      <div className="flex h-[23px] shrink-0 items-end">
        <span className="w-[3px] self-stretch border-b border-[#8ba1c4]" />
        <div className="flex h-[21px] items-center gap-[3px] border border-b-0 border-[#8ba1c4] bg-[#d3e0f0] px-[7px] text-[#15285a]">
          <span className="whitespace-nowrap">Receipt Listing Reporting with Auto Numbering</span>
          <button type="button" aria-label="Close tab">
            <svg width="9" height="9" viewBox="0 0 9 9" aria-hidden="true">
              <path d="M1 1L8 8M8 1L1 8" stroke="#66799f" strokeWidth="2" />
            </svg>
          </button>
        </div>
        <span className="flex-1 self-stretch border-b border-[#8ba1c4]" />
      </div>
      <div className="mt-[17px] flex shrink-0 items-center">
        <svg width="50" height="11" viewBox="0 0 50 11" aria-hidden="true" className="shrink-0">
          <path d="M29 0V10H19Z" fill="#7e93b2" />
        </svg>
        <RulerX />
      </div>
      <div className="mt-[14px] flex min-h-0 flex-1 overflow-hidden">
        <div className="ml-[17px] mr-4 flex w-[14px] shrink-0 flex-col overflow-hidden pt-[3px]">
          <RulerSegment height="h-[47px]" ticks={3} margin />
          <BandHandle />
          <RulerSegment height="h-[126px]" ticks={9} />
          <BandHandle />
          <RulerSegment height="h-7" ticks={2} />
          <BandHandle />
          <RulerSegment height="h-[22px]" ticks={1} />
          <BandHandle />
          <RulerSegment height="h-[23px]" ticks={1} />
        </div>
        <ReportPage />
      </div>
    </main>
  );
}

export default function App() {
  return (
    <div className="flex h-screen flex-col overflow-hidden bg-[#d0ddee] font-['DejaVu_Sans_Condensed','Noto_Sans',sans-serif] text-[11px] leading-4 text-black">
      <header className="flex h-[23px] shrink-0 items-center gap-[5px] border-b border-[#7d96b9] bg-gradient-to-b from-[#c2d4ea] to-[#b9cde6] pl-1 text-[#1f3a63]">
        <svg width="12" height="16" viewBox="0 0 12 16" aria-hidden="true">
          <path d="M0 0H12V10H8L6 13L4 10H0Z" fill="#efb738" />
          <path d="M2 2H10V8H2Z" fill="#f9d978" />
          <path d="M0 14H12" stroke="#4c6ea5" strokeWidth="3" strokeDasharray="2 1" />
        </svg>
        <h1>Report Designer</h1>
      </header>
      <nav className="flex h-6 shrink-0 items-center text-[12px] text-[#1f3a63]">
        <Grip />
        <div className="ml-[5px] flex gap-[13px]">
          {['File', 'Edit', 'View', 'Format', 'Window'].map((item) => (
            <button key={item} type="button">{item}</button>
          ))}
        </div>
      </nav>
      <Toolbars />
      <div className="flex min-h-0 flex-1">
        <Toolbox />
        <FieldList />
        <DesignSurface />
      </div>
    </div>
  );
}
